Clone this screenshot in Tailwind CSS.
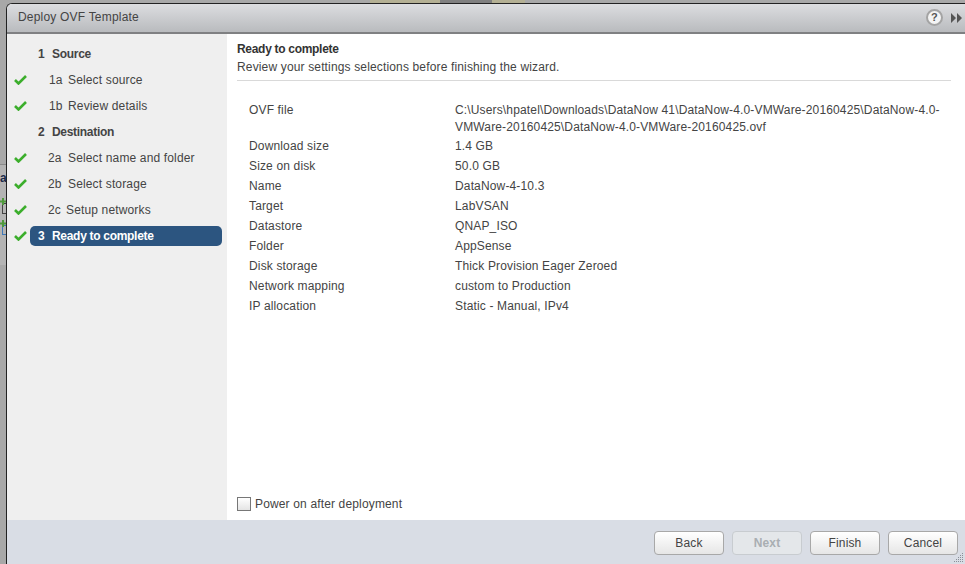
<!DOCTYPE html>
<html lang="en">
<head>
<meta charset="UTF-8">
<title>Deploy OVF Template</title>
<script src="https://cdn.jsdelivr.net/npm/@tailwindcss/browser@4"></script>
</head>
<body class="relative w-[965px] h-[564px] overflow-hidden bg-[#a8a8a8] font-['Liberation_Sans',Arial,sans-serif] text-[12px] tracking-[0.15px] text-[#333]">
  <!-- bits of the page behind the dialog -->
  <div class="absolute left-0 top-[164px] w-[6px] h-[1px] bg-[#8a8a8a]"></div>
  <div class="absolute left-0 top-[165px] w-[6px] h-[100px] bg-[#b4b4b4]"></div>
  <div class="absolute left-0 top-[172px] w-[6px] h-[13px] overflow-hidden text-[12px] leading-[13px] font-bold text-[#1a2a4a]">a</div>
  <div class="absolute left-[2px] top-[203px] w-[4px] h-[11px] border-l border-y border-[#444]"></div>
  <div class="absolute left-[2px] top-[225px] w-[4px] h-[10px] border-l border-y border-[#3f78b8]"></div>
  <svg class="absolute left-0 top-[198px]" width="6" height="7" viewBox="0 0 6 7"><path d="M2 0h2v2.500h2v2h-2v2.500h-2v-2.500h-2v-2h2z" fill="#4f9a3c"/></svg>
  <svg class="absolute left-0 top-[220px]" width="6" height="7" viewBox="0 0 6 7"><path d="M2 0h2v2.500h2v2h-2v2.500h-2v-2.500h-2v-2h2z" fill="#4f9a3c"/></svg>
  <div class="absolute left-[370px] top-0 w-[155px] h-[3px] bg-[#b4b094]"></div>
  <div class="absolute left-[440px] top-0 w-[52px] h-[3px] bg-[#808080]"></div>

  <!-- dialog -->
  <div class="absolute left-[6px] top-[3px] w-[965px] h-[570px] bg-white border-l border-t border-[#222] rounded-tl-[6px] flex flex-col">
    <div class="h-[30px] shrink-0 flex items-center pl-[11px] pb-[2px] bg-gradient-to-b from-[#dcdde0] to-[#b9bbbe] border-b-2 border-[#7f8082] rounded-tl-[5px]">
      <span class="text-[12px] tracking-[0.2px] text-[#444]">Deploy OVF Template</span>
    </div>
    <div class="flex h-[486px]">
      <!-- steps -->
      <div class="w-[220px] shrink-0 bg-[#efefef] flex flex-col pt-[7px] text-[#444]">
        <div class="h-[26px] flex items-center pl-[31px] font-bold tracking-[-0.3px]"><span class="w-[14px]">1</span>Source</div>
        <div class="h-[26px] flex items-center pl-[42px]"><span class="w-[19px]">1a</span>Select source</div>
        <div class="h-[26px] flex items-center pl-[42px]"><span class="w-[19px]">1b</span>Review details</div>
        <div class="h-[26px] flex items-center pl-[31px] font-bold tracking-[-0.3px]"><span class="w-[14px]">2</span>Destination</div>
        <div class="h-[26px] flex items-center pl-[41px]"><span class="w-[20px]">2a</span>Select name and folder</div>
        <div class="h-[26px] flex items-center pl-[41px]"><span class="w-[20px]">2b</span>Select storage</div>
        <div class="h-[26px] flex items-center pl-[41px]"><span class="w-[18px]">2c</span>Setup networks</div>
        <div class="ml-[23px] mt-[3px] h-[20px] w-[192px] flex items-center pl-[8px] rounded-[5px] bg-[#2c5580] text-white font-bold tracking-[-0.3px]"><span class="w-[14px]">3</span>Ready to complete</div>
      </div>
      <!-- content -->
      <div class="flex-1 flex flex-col pl-[10px]">
        <div class="w-[714px] h-[47px] pt-[7px] border-b border-[#d9d9d9]">
          <div class="font-bold leading-[16px] tracking-[-0.3px] text-[#333]">Ready to complete</div>
          <div class="leading-[18px] mt-[1px] text-[#444]">Review your settings selections before finishing the wizard.</div>
        </div>
        <div class="grid grid-cols-[206px_490px] pl-[12px] pt-[21px] text-[#444] leading-[17px] gap-y-[3px]">
          <div>OVF file</div><div class="h-[33px] break-words">C:\Users\hpatel\Downloads\DataNow 41\DataNow-4.0-VMWare-20160425\DataNow-4.0-VMWare-20160425\DataNow-4.0-VMWare-20160425.ovf</div>
          <div>Download size</div><div>1.4 GB</div>
          <div>Size on disk</div><div>50.0 GB</div>
          <div>Name</div><div>DataNow-4-10.3</div>
          <div>Target</div><div>LabVSAN</div>
          <div>Datastore</div><div>QNAP_ISO</div>
          <div>Folder</div><div>AppSense</div>
          <div>Disk storage</div><div>Thick Provision Eager Zeroed</div>
          <div>Network mapping</div><div>custom to Production</div>
          <div>IP allocation</div><div>Static - Manual, IPv4</div>
        </div>
        <div class="mt-auto h-[23px] flex items-start text-[#444]">
          <div class="w-[14px] h-[14px] border border-[#777] bg-gradient-to-b from-white to-[#e4e4e4]"></div>
          <span class="ml-[4px] leading-[14px]">Power on after deployment</span>
        </div>
      </div>
    </div>
    <!-- footer -->
    <div class="h-[47px] bg-[#d9dde5] flex items-start gap-[8px] pl-[647px] pt-[11px]">
      <button class="w-[70px] h-[24px] rounded-[4px] border border-[#a8a8a8] bg-gradient-to-b from-white to-[#e6e6e6] text-[#444]">Back</button>
      <button class="w-[70px] h-[24px] rounded-[4px] border border-[#c8ccd0] bg-[#e4e7ea] text-[#a9aeb2] font-bold">Next</button>
      <button class="w-[70px] h-[24px] rounded-[4px] border border-[#a8a8a8] bg-gradient-to-b from-white to-[#e6e6e6] text-[#444]">Finish</button>
      <button class="w-[70px] h-[24px] rounded-[4px] border border-[#a8a8a8] bg-gradient-to-b from-white to-[#e6e6e6] text-[#444]">Cancel</button>
    </div>
  </div>
  <!-- title bar icons -->
  <div class="absolute left-[926px] top-[9px] w-[17px] h-[17px] rounded-full bg-[#f4f4f4] border-2 border-[#a4a4a4] flex items-center justify-center text-[11px] font-bold text-[#555]">?</div>
  <svg class="absolute left-[951px] top-[13px]" width="11" height="10" viewBox="0 0 11 10"><path d="M0 0l5 5-5 5zM6 0l5 5-5 5z" fill="#555"/></svg>
  <!-- check marks -->
  <svg class="absolute left-[14px] top-[75px]" width="13" height="10" viewBox="0 0 13 10"><path d="M1 5l3.500 3.500L12 1" fill="none" stroke="#3cae2c" stroke-width="2.600"/></svg>
  <svg class="absolute left-[14px] top-[101px]" width="13" height="10" viewBox="0 0 13 10"><path d="M1 5l3.500 3.500L12 1" fill="none" stroke="#3cae2c" stroke-width="2.600"/></svg>
  <svg class="absolute left-[14px] top-[153px]" width="13" height="10" viewBox="0 0 13 10"><path d="M1 5l3.500 3.500L12 1" fill="none" stroke="#3cae2c" stroke-width="2.600"/></svg>
  <svg class="absolute left-[14px] top-[179px]" width="13" height="10" viewBox="0 0 13 10"><path d="M1 5l3.500 3.500L12 1" fill="none" stroke="#3cae2c" stroke-width="2.600"/></svg>
  <svg class="absolute left-[14px] top-[205px]" width="13" height="10" viewBox="0 0 13 10"><path d="M1 5l3.500 3.500L12 1" fill="none" stroke="#3cae2c" stroke-width="2.600"/></svg>
  <svg class="absolute left-[14px] top-[231px]" width="13" height="10" viewBox="0 0 13 10"><path d="M1 5l3.500 3.500L12 1" fill="none" stroke="#3cae2c" stroke-width="2.600"/></svg>
  <!-- resize grip -->
  <svg class="absolute left-[954px] top-[552px]" width="11" height="12" viewBox="0 0 11 12" fill="#8a8f98"><rect x="8" y="1" width="1" height="1"/><rect x="6" y="3" width="1" height="1"/><rect x="8" y="3" width="1" height="1"/><rect x="4" y="5" width="1" height="1"/><rect x="6" y="5" width="1" height="1"/><rect x="8" y="5" width="1" height="1"/><rect x="2" y="7" width="1" height="1"/><rect x="4" y="7" width="1" height="1"/><rect x="6" y="7" width="1" height="1"/><rect x="8" y="7" width="1" height="1"/><rect x="0" y="9" width="1" height="1"/><rect x="2" y="9" width="1" height="1"/><rect x="4" y="9" width="1" height="1"/><rect x="6" y="9" width="1" height="1"/><rect x="8" y="9" width="1" height="1"/></svg>
</body>
</html>
